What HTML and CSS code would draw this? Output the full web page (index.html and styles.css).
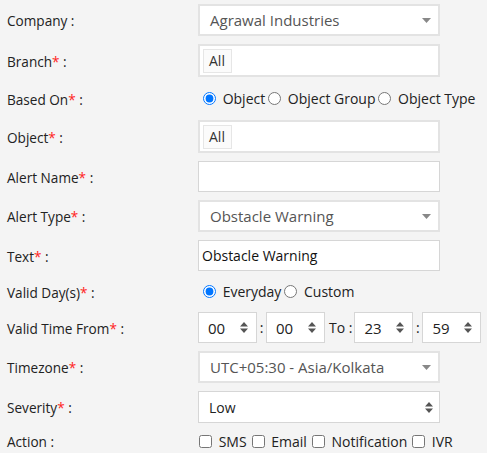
FILE: index.html
```html
<!DOCTYPE html>
<html>
<head>
<meta charset="utf-8">
<link rel="stylesheet" href="styles.css">
</head>
<body>
<form class="form">
  <div class="row h-select">
    <label class="lbl">Company :</label>
    <div class="ctl sel">
      <span class="sel-text">Agrawal Industries</span>
      <svg class="caret" width="9" height="5" viewBox="0 0 9 5"><path d="M0 0H9L4.5 5Z" fill="#888"/></svg>
    </div>
  </div>
  <div class="row h-tag">
    <label class="lbl">Branch<span class="req">*</span> :</label>
    <div class="ctl tagbox"><span class="tag">All</span></div>
  </div>
  <div class="row h-radio1">
    <label class="lbl">Based On<span class="req">*</span> :</label>
    <div class="opts">
      <label class="opt"><input type="radio" name="based" checked> Object</label>
      <label class="opt"><input type="radio" name="based"> Object Group</label>
      <label class="opt"><input type="radio" name="based"> Object Type</label>
    </div>
  </div>
  <div class="row h-tag">
    <label class="lbl">Object<span class="req">*</span> :</label>
    <div class="ctl tagbox"><span class="tag">All</span></div>
  </div>
  <div class="row h-input">
    <label class="lbl">Alert Name<span class="req">*</span> :</label>
    <div class="ctl txt"></div>
  </div>
  <div class="row h-select">
    <label class="lbl">Alert Type<span class="req">*</span> :</label>
    <div class="ctl sel">
      <span class="sel-text">Obstacle Warning</span>
      <svg class="caret" width="9" height="5" viewBox="0 0 9 5"><path d="M0 0H9L4.5 5Z" fill="#888"/></svg>
    </div>
  </div>
  <div class="row h-input2">
    <label class="lbl">Text<span class="req">*</span> :</label>
    <div class="ctl txt"><span class="txt-val">Obstacle Warning</span></div>
  </div>
  <div class="row h-radio2">
    <label class="lbl">Valid Day(s)<span class="req">*</span> :</label>
    <div class="opts">
      <label class="opt"><input type="radio" name="day" checked> Everyday</label>
      <label class="opt"><input type="radio" name="day"> Custom</label>
    </div>
  </div>
  <div class="row h-input">
    <label class="lbl">Valid Time From<span class="req">*</span> :</label>
    <div class="times">
      <div class="ctl tsel"><span>00</span><svg class="updown" width="8" height="11" viewBox="0 0 8 11"><path d="M4 0L8 4.5H0Z M0 6.5H8L4 11Z" fill="#555"/></svg></div>
      <span class="sep">:</span>
      <div class="ctl tsel"><span>00</span><svg class="updown" width="8" height="11" viewBox="0 0 8 11"><path d="M4 0L8 4.5H0Z M0 6.5H8L4 11Z" fill="#555"/></svg></div>
      <span class="sep to">To :</span>
      <div class="ctl tsel"><span>23</span><svg class="updown" width="8" height="11" viewBox="0 0 8 11"><path d="M4 0L8 4.5H0Z M0 6.5H8L4 11Z" fill="#555"/></svg></div>
      <span class="sep">:</span>
      <div class="ctl tsel"><span>59</span><svg class="updown" width="8" height="11" viewBox="0 0 8 11"><path d="M4 0L8 4.5H0Z M0 6.5H8L4 11Z" fill="#555"/></svg></div>
    </div>
  </div>
  <div class="row h-select">
    <label class="lbl">Timezone<span class="req">*</span> :</label>
    <div class="ctl sel">
      <span class="sel-text">UTC+05:30 - Asia/Kolkata</span>
      <svg class="caret" width="9" height="5" viewBox="0 0 9 5"><path d="M0 0H9L4.5 5Z" fill="#888"/></svg>
    </div>
  </div>
  <div class="row h-select">
    <label class="lbl">Severity<span class="req">*</span> :</label>
    <div class="ctl sel native">
      <span class="sel-text dark">Low</span>
      <svg class="updown" width="8" height="11" viewBox="0 0 8 11"><path d="M4 0L8 4.5H0Z M0 6.5H8L4 11Z" fill="#555"/></svg>
    </div>
  </div>
  <div class="row h-check">
    <label class="lbl">Action :</label>
    <div class="checks">
      <label class="chk"><input type="checkbox"> SMS</label>
      <label class="chk"><input type="checkbox"> Email</label>
      <label class="chk"><input type="checkbox"> Notification</label>
      <label class="chk"><input type="checkbox"> IVR</label>
    </div>
  </div>
</form>
</body>
</html>
```
FILE: styles.css
```css
html, body {
  margin: 0;
  padding: 0;
  background: #f4f4f4;
}
body {
  font-family: "Open Sans", "Liberation Sans", sans-serif;
  color: #222;
  font-size: 13px;
}
.form {
  padding: 4px 0 0 7px;
  display: flex;
  flex-direction: column;
  gap: 8px;
}
.row {
  display: grid;
  grid-template-columns: 191px auto;
  align-items: center;
}
.h-select { height: 32px; }
.h-tag { height: 33px; }
.h-input { height: 31px; }
.h-input2 { height: 31px; }
.h-radio1 { height: 27px; }
.h-radio2 { height: 25px; }
.h-check { height: 20px; }
.lbl {
  font-size: 13.6px;
  color: #222;
  padding-top: 1px;
}
.req { color: #f22; }
.ctl {
  box-sizing: border-box;
  height: 100%;
  width: 242px;
  background: #fff;
  border: 1px solid #d9d9d9;
  display: flex;
  align-items: center;
}
.sel {
  padding: 0 7px 0 10px;
  justify-content: space-between;
  border-width: 2px;
  border-color: #e3e3e3;
}
.sel-text {
  font-size: 15px;
  color: #555;
}
.sel-text.dark { color: #222; font-size: 14px; }
.native { border-width: 1px; border-color: #d6d6d6; padding-right: 6px; }
.tagbox {
  border: 2px solid #e3e3e3;
  padding-left: 3px;
}
.tag {
  box-sizing: border-box;
  height: 24px;
  line-height: 22px;
  padding: 0 6px 0 5px;
  border: 1px solid #e6e6e6;
  background: #fbfbfb;
  font-size: 14px;
  color: #333;
}
.txt {
  border: 1px solid #d6d6d6;
  padding-left: 3px;
}
.txt-val { font-size: 14px; color: #111; }
.opts, .checks {
  display: flex;
  align-items: center;
  font-size: 14px;
  color: #222;
}
.opt { display: flex; align-items: center; white-space: pre; }
.opt input {
  margin: 0 3px 0 5px;
  width: 13px;
  height: 13px;
}
.opt + .opt input { margin-left: 3px; }
.times {
  display: flex;
  align-items: center;
  height: 100%;
}
.tsel {
  width: 59px;
  padding: 0 8px 0 9px;
  justify-content: space-between;
  font-size: 15px;
  color: #222;
  border: 1px solid #d6d6d6;
}
.sep {
  width: 9px;
  text-align: center;
  font-size: 14px;
}
.sep.to { width: auto; padding: 0 2px 0 4px; }
.chk { display: flex; align-items: center; white-space: pre; margin-right: 5px; }
.chk input {
  margin: 0 3px 0 1px;
  width: 13px;
  height: 13px;
}
.chk + .chk input { margin-left: 0; }
```
